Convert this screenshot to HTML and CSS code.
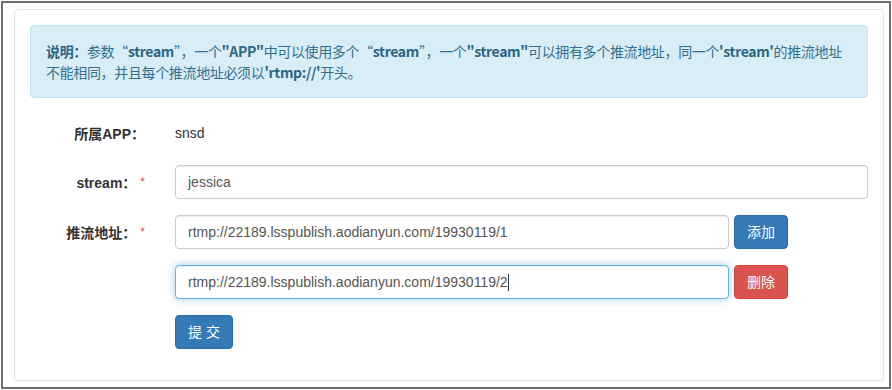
FILE: index.html
```html
<!DOCTYPE html>
<html lang="zh-CN">
<head>
<meta charset="utf-8">
<title>推流地址</title>
<link rel="stylesheet" href="styles.css">
</head>
<body>
<div class="frame">
  <div class="panel">
    <div class="alert">
      <strong>说明：</strong>参数“<strong>stream</strong>”，一个<strong>"APP"</strong>中可以使用多个“<strong>stream</strong>”，一个<strong>"stream"</strong>可以拥有多个推流地址，同一个<strong>'stream'</strong>的推流地址不能相同，并且每个推流地址必须以<strong>'rtmp://'</strong>开头。
    </div>
    <form class="form">
      <div class="row">
        <label class="label">所属APP：</label>
        <div class="static">snsd</div>
      </div>
      <div class="row">
        <label class="label">stream：<span class="req">*</span></label>
        <div class="field">jessica</div>
      </div>
      <div class="row">
        <label class="label">推流地址：<span class="req">*</span></label>
        <div class="addr">
          <div class="field field-addr">rtmp://22189.lsspublish.aodianyun.com/19930119/1</div>
          <button type="button" class="btn btn-primary">添加</button>
        </div>
      </div>
      <div class="row">
        <span></span>
        <div class="addr">
          <div class="field field-addr focus">rtmp://22189.lsspublish.aodianyun.com/19930119/2<span class="caret"></span></div>
          <button type="button" class="btn btn-danger">删除</button>
        </div>
      </div>
      <div class="row">
        <span></span>
        <div><button type="button" class="btn btn-primary btn-submit">提 交</button></div>
      </div>
    </form>
  </div>
</div>
</body>
</html>
```
FILE: styles.css
```css
* { box-sizing: border-box; }
html, body { margin: 0; padding: 0; background: #fff; }
body {
  padding: 1px;
  font-family: "Liberation Sans", "Noto Sans CJK SC", sans-serif;
  font-size: 14px;
  color: #333;
}
.frame {
  width: 890px;
  height: 388px;
  border: 2px solid #6e6e6e;
  display: flex;
  flex-direction: column;
}
.panel {
  flex: 1;
  margin: 6px 5px 6px 11px;
  border: 1px solid #e3e3e3;
  border-radius: 4px;
  box-shadow: 0 1px 2px rgba(0,0,0,0.06);
  padding: 15px;
}
.alert {
  background: #d9edf7;
  border: 1px solid #bce8f1;
  border-radius: 4px;
  color: #31708f;
  padding: 15px 15px 14px 15px;
  font-family: "Noto Sans CJK SC", sans-serif;
  font-size: 14px;
  line-height: 21px;
  letter-spacing: -0.35px;
}
.alert strong { font-weight: 700; color: #2b6583; }
.form {
  margin-top: 19px;
  display: flex;
  flex-direction: column;
  gap: 16px;
}
.row {
  display: grid;
  grid-template-columns: 115px 1fr;
  column-gap: 30px;
  align-items: center;
}
.row:first-child { height: 32px; }
.label {
  text-align: right;
  font-weight: 700;
  color: #333;
}
.req {
  color: #d9534f;
  font-weight: 400;
  font-size: 12px;
  margin-left: 4px;
  vertical-align: 2px;
}
.static { color: #333; }
.field {
  height: 34px;
  border: 1px solid #ccc;
  border-radius: 4px;
  padding: 0 12px;
  line-height: 32px;
  color: #555;
  background: #fff;
  box-shadow: inset 0 1px 1px rgba(0,0,0,0.075);
  white-space: nowrap;
}
.field.focus {
  border-color: #66afe9;
  box-shadow: inset 0 1px 1px rgba(0,0,0,0.075), 0 0 8px rgba(102,175,233,0.6);
}
.caret {
  display: inline-block;
  width: 1px;
  height: 17px;
  background: #333;
  vertical-align: -4px;
}
.addr {
  display: flex;
  align-items: center;
  gap: 5px;
}
.field-addr { width: 554px; }
.btn {
  height: 34px;
  padding: 0 12px;
  border: 1px solid transparent;
  border-radius: 4px;
  font-family: "Liberation Sans", "Noto Sans CJK SC", sans-serif;
  font-size: 14px;
  color: #fff;
  line-height: 32px;
  cursor: pointer;
}
.btn-primary { background: #337ab7; border-color: #2e6da4; }
.btn-danger { background: #d9534f; border-color: #d43f3a; }
.btn-submit { width: 58px; padding: 0; }
```
